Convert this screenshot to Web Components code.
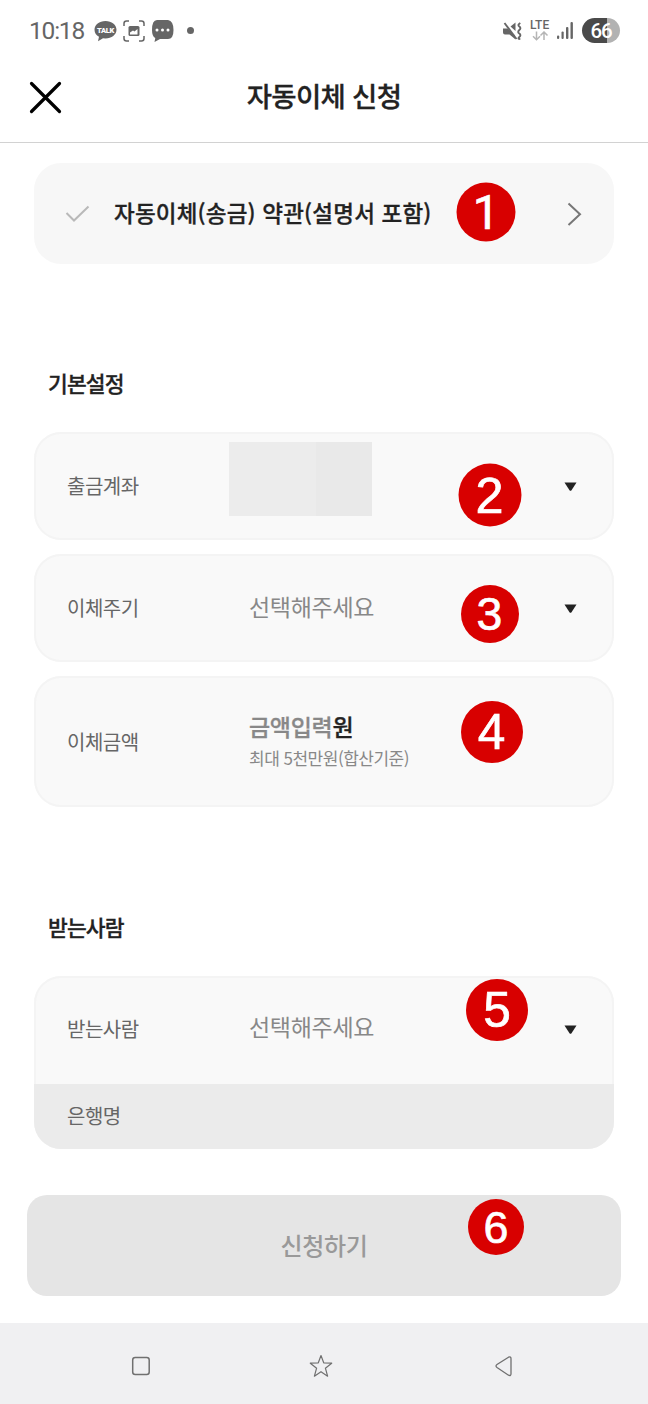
<!DOCTYPE html>
<html lang="ko">
<head>
<meta charset="utf-8">
<title>자동이체 신청</title>
<style>
  body {
    margin: 0;
    background: #fff;
    color: #222;
    font-family: "Noto Sans CJK KR", sans-serif;
  }
</style>
</head>
<body>
<transfer-page></transfer-page>

<script>
  // Small helper, every element renders its markup into an open shadow root
  class BaseElement extends HTMLElement {
    constructor() {
      super();
      this.attachShadow({ mode: 'open' });
    }

    connectedCallback() {
      this.shadowRoot.innerHTML = this.template();
    }
  }

  class StatusBar extends BaseElement {
    template() {
      return `
        <style>
          :host {
            display: flex;
            justify-content: space-between;
            align-items: center;
            height: 60px;
            padding: 1px 28px 0 29px;
            box-sizing: border-box;
            color: #666;
            font-family: Roboto, sans-serif;
          }
          .group { display: flex; align-items: center; }
          .time { width: 65px; font-size: 24.5px; letter-spacing: -1.2px; line-height: 60px; }
          svg { display: block; flex: none; }
          .scan { margin: 0 6px; }
          .dot { width: 7px; height: 7px; border-radius: 50%; background: #666; margin-left: 13px; }
          .lte { width: 22px; margin-left: 8px; }
          .lte span { display: block; font: 500 12px/11px Roboto, sans-serif; letter-spacing: .1px; }
          .signal { margin: 0 8px 0 4px; }
          .battery {
            width: 38px;
            height: 25px;
            border-radius: 13px;
            background: linear-gradient(90deg, #4a4a4a 65%, #b2b2b2 65%);
            color: #fff;
            font: 500 20.5px/26px Roboto, sans-serif;
            letter-spacing: -1.2px;
            text-align: center;
          }
        </style>
        <div class="group">
          <span class="time">10:18</span>
          <svg width="23" height="22" viewBox="0 0 23 22">
            <path d="M11.5 1C5.300 1 .5 4.800 .5 9.700c0 3.100 1.800 5.600 4.500 7.100L4 21.300l5-3.100 2.500.2c6.100 0 11-3.900 11-8.700S17.600 1 11.500 1z" fill="#666"/>
            <text x="11.500" y="12.600" text-anchor="middle" font-family="Roboto, sans-serif" font-size="7.500" font-weight="900" letter-spacing="-.3" fill="#fff">TALK</text>
          </svg>
          <svg class="scan" width="22" height="22" viewBox="0 0 22 22" fill="none" stroke="#666" stroke-width="1.500">
            <path d="M1 6V3.500Q1 1 3.500 1H6M16 1h2.500Q21 1 21 3.500V6M21 16v2.500q0 2.500-2.500 2.500H16M6 21H3.500Q1 21 1 18.500V16"/>
            <rect x="5.500" y="6" width="11" height="10" rx="1.500" fill="#666" stroke="none"/>
            <path d="M7 14.500v-2l3-2 1.500 1 3-2.500v5.500z" fill="#fff" stroke="none"/>
          </svg>
          <svg width="23" height="22" viewBox="0 0 23 22">
            <path d="M6 0h11q5.500 1 5.500 10T17 19H9l-5.500 3 .8-4Q1 16.500 1 10 1 0 6 0z" fill="#666"/>
            <g fill="#fff"><circle cx="6" cy="10" r="1.500"/><circle cx="11.500" cy="10" r="1.500"/><circle cx="17" cy="10" r="1.500"/></g>
          </svg>
          <div class="dot"></div>
        </div>
        <div class="group">
          <svg width="20" height="20" viewBox="0 0 20 20">
            <path d="M1 7.500h4.500l7.500 7v3.500l-5.500-4.500H3q-2 0-2-2zM8.500 5.500L13.500 1.500v8.500z" fill="#666"/>
            <path d="M2.500 2L14.500 18" stroke="#666" stroke-width="1.900" fill="none"/>
            <path d="M18.300 2q-3.200 2-1 3.500t0 3.500 0 3.500 0 3.500 1 2" stroke="#666" stroke-width="1.900" fill="none"/>
          </svg>
          <div class="lte">
            <span>LTE</span>
            <svg width="22" height="10" viewBox="0 0 22 10" fill="none" stroke="#b5b5b5" stroke-width="1.500">
              <path d="M6.500 .5v8M3 5.200L6.500 8.700 10 5.200M14 9V1M10.500 4.500L14 1l3.500 3.500"/>
            </svg>
          </div>
          <svg class="signal" width="18" height="18" viewBox="0 0 18 18" fill="#666">
            <rect x="1" y="13.500" width="2.200" height="3.500" rx="1"/>
            <rect x="5.500" y="9.500" width="2.200" height="7.500" rx="1"/>
            <rect x="10" y="5" width="2.400" height="12" rx="1"/>
            <rect x="14.500" y="0" width="2.400" height="17" rx="1"/>
          </svg>
          <div class="battery">66</div>
        </div>
      `;
    }
  }

  class PageHeader extends BaseElement {
    template() {
      return `
        <style>
          :host {
            display: grid;
            grid-template-columns: 60px 1fr 60px;
            align-items: center;
            height: 83px;
            padding: 0 28px;
            box-sizing: border-box;
            border-bottom: 1px solid #d2d2d2;
          }
          svg { display: block; margin-bottom: 9px; }
          h1 {
            margin: 0 0 12px;
            text-align: center;
            color: #222;
            font-size: 27.5px;
            line-height: 40px;
            font-weight: 500;
            letter-spacing: -.7px;
            -webkit-text-stroke: .3px;
          }
        </style>
        <svg width="34" height="34" viewBox="0 0 34 34" stroke="#000" stroke-width="3.200" stroke-linecap="round">
          <path d="M3.500 3.500l28 28M31.500 3.500l-28 28"/>
        </svg>
        <h1><slot></slot></h1>
      `;
    }
  }

  // Numbered red marker that lies over its card: x and y are the centre inside the card
  class StepBadge extends BaseElement {
    template() {
      const size = Number(this.getAttribute('size'));
      const step = this.getAttribute('step');
      return `
        <style>
          :host {
            position: absolute;
            left: ${this.getAttribute('x')}px;
            top: ${this.getAttribute('y')}px;
            width: ${size}px;
            height: ${size}px;
            transform: translate(-50%, -50%);
            border-radius: 50%;
            background: #d80000;
            color: #fff;
            text-align: center;
            font: ${size * 0.8}px/${size + 1}px ${step === '1' ? 'Roboto' : '"Liberation Sans"'}, sans-serif;
            -webkit-text-stroke: .7px #fff;
          }
        </style>${step}`;
    }
  }

  class TermsCard extends BaseElement {
    template() {
      return `
        <style>
          :host {
            position: relative;
            display: flex;
            align-items: center;
            height: 101px;
            padding: 0 32px 0 31px;
            box-sizing: border-box;
            border-radius: 27px;
            background: #f7f7f7;
          }
          svg { flex: none; }
          .title {
            flex: 1;
            margin: -4px 0 0 24px;
            font-size: 22.5px;
            font-weight: 500;
            line-height: 34px;
            letter-spacing: .2px;
            white-space: nowrap;
            -webkit-text-stroke: .3px;
          }
        </style>
        <svg width="25" height="18" viewBox="0 0 25 18" fill="none" stroke="#b9b9b9" stroke-width="2">
          <path d="M1.500 8l7.500 7.500L23.500 1.500"/>
        </svg>
        <div class="title"><slot></slot></div>
        <svg width="15" height="24" viewBox="0 0 15 24" fill="none" stroke="#777" stroke-width="2">
          <path d="M1.500 1.500L13 12.200 1.500 23"/>
        </svg>
        <slot name="badge"></slot>
      `;
    }
  }

  class FormSection extends BaseElement {
    template() {
      return `
        <style>
          :host { display: block; }
          h2 {
            margin: 0 0 32px 14px;
            font-size: 21.5px;
            font-weight: 500;
            line-height: 34px;
            letter-spacing: -.9px;
            -webkit-text-stroke: .3px;
          }
          .rows { display: flex; flex-direction: column; gap: 14px; }
        </style>
        <h2>${this.getAttribute('heading')}</h2>
        <div class="rows"><slot></slot></div>
      `;
    }
  }

  class FieldRow extends BaseElement {
    template() {
      return `
        <style>
          :host {
            position: relative;
            display: block;
            border-radius: 27px;
            background: #f9f9f9;
            box-shadow: inset 0 0 0 2px #f4f4f4;
            overflow: hidden;
          }
          .row {
            display: grid;
            grid-template-columns: 182px 1fr 13px;
            align-items: center;
            height: var(--row-height, 108px);
            padding: 0 37px var(--row-shift, 0px) 33px;
            box-sizing: border-box;
          }
          .label {
            color: #666;
            font-size: 20px;
            line-height: 30px;
            letter-spacing: -.5px;
          }
          .value {
            margin-top: var(--value-shift, -4px);
            color: #888;
            font-size: 23px;
            line-height: 34px;
            letter-spacing: -.3px;
          }
        </style>
        <div class="row">
          <div class="label">${this.getAttribute('label')}</div>
          <div class="value"><slot></slot></div>
          ${this.hasAttribute('select') ? `
            <svg width="13" height="9" viewBox="0 0 13 9"><path d="M.5.500h12L7.500 8.200q-1 1-2 0z" fill="#222"/></svg>
          ` : ''}
        </div>
        <slot name="footer"></slot>
        <slot name="badge"></slot>
      `;
    }
  }

  class AmountInput extends BaseElement {
    template() {
      return `
        <style>
          :host { display: block; }
          .amount { font-weight: 500; line-height: 34px; letter-spacing: -.3px; -webkit-text-stroke: .3px; }
          .amount b { color: #222; font-weight: 500; }
          .hint { font-size: 17px; line-height: 26px; letter-spacing: -.5px; margin-top: 2px; }
        </style>
        <div class="amount">금액입력<b>원</b></div>
        <div class="hint">최대 5천만원(합산기준)</div>
      `;
    }
  }

  // Covered account number
  class MaskedAccount extends BaseElement {
    template() {
      return `
        <style>
          :host {
            display: block;
            width: 143px;
            height: 74px;
            margin: -11px 0 0 -20px;
            background: linear-gradient(90deg, #ececec 61%, #e9e9e9 61%);
          }
        </style>
      `;
    }
  }

  class BankName extends BaseElement {
    template() {
      return `
        <style>
          :host {
            display: block;
            height: 65px;
            padding-left: 33px;
            background: #ebebeb;
            color: #666;
            font-size: 20px;
            line-height: 63px;
            letter-spacing: -.5px;
          }
        </style>
        <slot></slot>
      `;
    }
  }

  class SubmitButton extends BaseElement {
    template() {
      return `
        <style>
          :host { position: relative; display: block; }
          button {
            display: block;
            width: 100%;
            height: 101px;
            padding: 0 0 1px;
            border: 0;
            border-radius: 20px;
            background: #e5e5e5;
            color: #999;
            font: 500 24px/36px "Noto Sans CJK KR", sans-serif;
            letter-spacing: -.3px;
          }
        </style>
        <button disabled><slot></slot></button>
        <slot name="badge"></slot>
      `;
    }
  }

  class NavBar extends BaseElement {
    template() {
      return `
        <style>
          :host {
            display: grid;
            grid-template-columns: 183px 182px 20px;
            align-items: center;
            height: 81px;
            padding: 5px 0 0 129px;
            box-sizing: border-box;
            background: #f0f0f2;
          }
          .star { margin-left: -4px; }
        </style>
        <svg width="24" height="24" viewBox="0 0 24 24" fill="none" stroke="#707070" stroke-width="1.500">
          <rect x="3.700" y="3.500" width="16.500" height="17" rx="2.500"/>
        </svg>
        <svg class="star" width="26" height="26" viewBox="0 0 26 26" fill="none" stroke="#707070" stroke-width="1.200" stroke-linejoin="round">
          <path d="M13 2.500l2.700 7.300 8 .4-6.300 5 2.200 8-6.600-4.500-6.600 4.500 2.200-8-6.300-5 8-.4z"/>
        </svg>
        <svg width="20" height="24" viewBox="0 0 20 24" fill="none" stroke="#707070" stroke-width="1.300">
          <path d="M14.500 3.200L3 10.500q-2 1.500 0 3l11.500 7.700q2.500 1 2.500-1.500v-15q0-2.500-2.500-1.500z"/>
        </svg>
      `;
    }
  }

  class TransferPage extends BaseElement {
    template() {
      return `
        <style>
          :host { display: flex; flex-direction: column; width: 648px; height: 1404px; overflow: hidden; }
          main { flex: 1; padding: 20px 34px 0; }
          .basic { margin-top: 102px; }
          .receiver { margin-top: 103px; }
          .amount-row { --row-height: 131px; }
          .receiver-row { --row-height: 108px; --row-shift: 2px; --value-shift: -6px; }
          submit-button { margin: 46px -7px 0; }
        </style>
        <status-bar></status-bar>
        <page-header>자동이체 신청</page-header>
        <main>
          <terms-card>자동이체(송금) 약관(설명서 포함)
            <step-badge slot="badge" step="1" size="59" x="452" y="49"></step-badge>
          </terms-card>

          <form-section class="basic" heading="기본설정">
            <field-row label="출금계좌" select>
              <masked-account></masked-account>
              <step-badge slot="badge" step="2" size="63" x="455.5" y="62.5"></step-badge>
            </field-row>
            <field-row label="이체주기" select>선택해주세요
              <step-badge slot="badge" step="3" size="58" x="455.5" y="59.5"></step-badge>
            </field-row>
            <field-row class="amount-row" label="이체금액">
              <amount-input></amount-input>
              <step-badge slot="badge" step="4" size="62" x="457.5" y="56"></step-badge>
            </field-row>
          </form-section>

          <form-section class="receiver" heading="받는사람">
            <field-row class="receiver-row" label="받는사람" select>선택해주세요
              <bank-name slot="footer">은행명</bank-name>
              <step-badge slot="badge" step="5" size="62" x="463" y="34"></step-badge>
            </field-row>
          </form-section>

          <submit-button>신청하기
            <step-badge slot="badge" step="6" size="56" x="469" y="32"></step-badge>
          </submit-button>
        </main>
        <nav-bar></nav-bar>
      `;
    }
  }

  customElements.define('status-bar', StatusBar);
  customElements.define('page-header', PageHeader);
  customElements.define('step-badge', StepBadge);
  customElements.define('terms-card', TermsCard);
  customElements.define('form-section', FormSection);
  customElements.define('field-row', FieldRow);
  customElements.define('amount-input', AmountInput);
  customElements.define('masked-account', MaskedAccount);
  customElements.define('bank-name', BankName);
  customElements.define('submit-button', SubmitButton);
  customElements.define('nav-bar', NavBar);
  customElements.define('transfer-page', TransferPage);
</script>
</body>
</html>
